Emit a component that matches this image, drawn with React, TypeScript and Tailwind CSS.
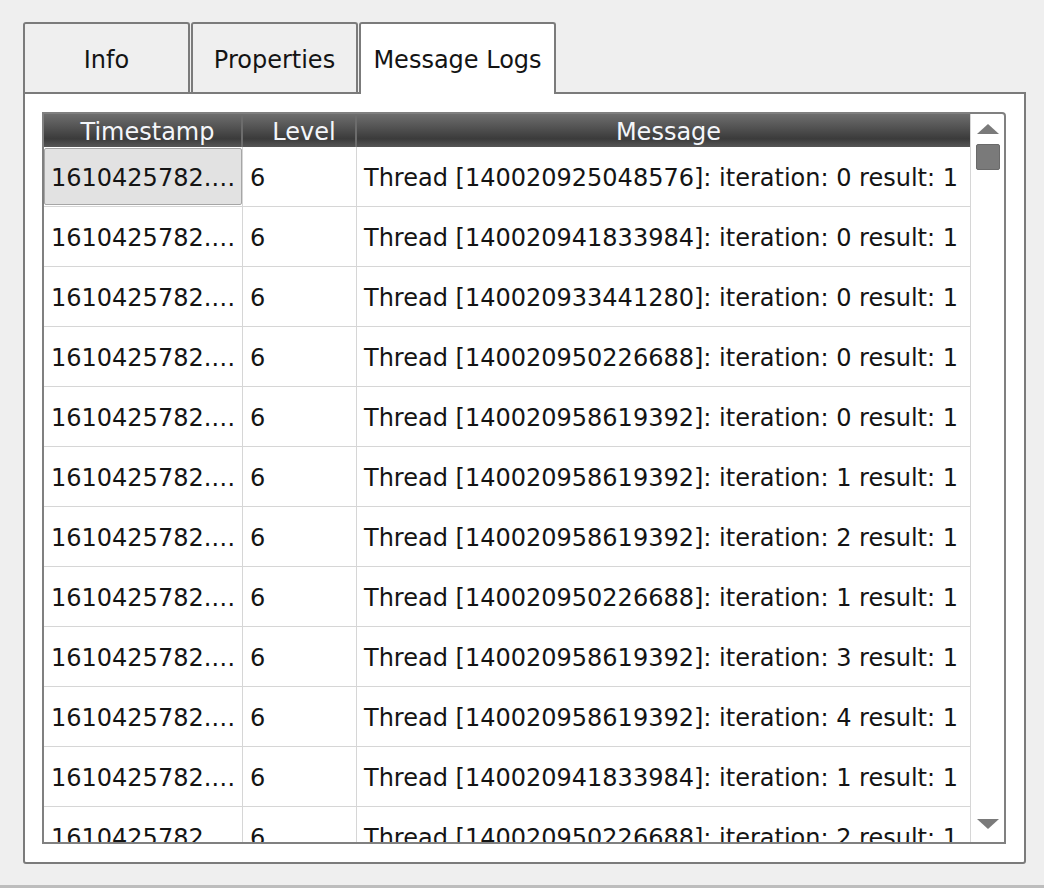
const rows: [string, number][] = [
  ["140020925048576", 0],
  ["140020941833984", 0],
  ["140020933441280", 0],
  ["140020950226688", 0],
  ["140020958619392", 0],
  ["140020958619392", 1],
  ["140020958619392", 2],
  ["140020950226688", 1],
  ["140020958619392", 3],
  ["140020958619392", 4],
  ["140020941833984", 1],
  ["140020950226688", 2],
];

const tabs = [
  { label: "Info", width: "w-[167px]", active: false },
  { label: "Properties", width: "w-[167px]", active: false },
  { label: "Message Logs", width: "w-[197px]", active: true },
];

export default function App() {
  return (
    <div className="w-[1044px] h-[888px] bg-[#efefef] flex flex-col font-['DejaVu_Sans',sans-serif] text-[24px] text-[#141414] overflow-hidden">
      <div className="pl-[23px] pt-[22px]">
        {/* Tab bar */}
        <div className="flex items-start gap-[1px] h-[70px]">
          {tabs.map((tab) => (
            <div
              key={tab.label}
              className={`${tab.width} border-2 border-b-0 border-[#7b7b7b] rounded-t-[3px] flex items-center justify-center ${
                tab.active ? "bg-white h-[72px] relative z-10 pt-[1px]" : "bg-[#efefef] h-[70px] pt-[3px]"
              }`}
            >
              {tab.label}
            </div>
          ))}
        </div>

        {/* Panel */}
        <div className="w-[1003px] h-[772px] border-2 border-[#7b7b7b] rounded-b-[3px] bg-white pl-[17px] pt-[18px]">
          <div className="w-[964px] h-[732px] border-2 border-[#808080] rounded-tr-[4px] flex overflow-hidden">
            <div className="w-[926px] flex flex-col overflow-hidden">
              {/* Header */}
              <div className="h-[33px] shrink-0 flex bg-[linear-gradient(to_bottom,#6e6e6e,#535353_40%,#3b3b3b_75%,#565656)] text-[#f4f6fa]">
                <div className="w-[199px] border-r-2 border-[#6c6c6c] flex items-center justify-center pl-[10px] pt-[2px]">Timestamp</div>
                <div className="w-[114px] border-r-2 border-[#6c6c6c] flex items-center justify-center pl-[10px] pt-[2px]">Level</div>
                <div className="flex-1 flex items-center justify-center pl-[10px] pt-[2px]">Message</div>
              </div>
              {/* Rows */}
              {rows.map(([thread, iter], i) => (
                <div key={i} className="h-[60px] shrink-0 flex border-b border-[#d6d6d6]">
                  <div className="w-[199px] border-r border-[#d6d6d6] flex items-stretch">
                    <div
                      className={`flex-1 flex items-center whitespace-nowrap ${
                        i === 0 ? "bg-[#e2e2e2] border border-[#a6a6a6] rounded-[2px] my-[1px] pl-[6px] pt-[2px]" : "pl-[7px] pt-[3px]"
                      }`}
                    >
                      1610425782.…
                    </div>
                  </div>
                  <div className="w-[114px] border-r border-[#d6d6d6] flex items-center pl-[7px] pt-[3px]">6</div>
                  <div className="flex-1 flex items-center pl-[7px] pt-[3px] whitespace-nowrap">
                    Thread [{thread}]: iteration: {iter} result: 1
                  </div>
                </div>
              ))}
            </div>

            {/* Scrollbar */}
            <div className="flex-1 border-l border-[#d6d6d6] flex flex-col items-center pt-[10px] pb-[13px]">
              <svg width="22" height="10" viewBox="0 0 22 10" className="shrink-0">
                <polygon points="11,0 22,10 0,10" fill="#7a7a7a" />
              </svg>
              <div className="w-[24px] h-[26px] mt-[10px] bg-[#7a7a7a] border border-[#6a6a6a] rounded-[2px]" />
              <div className="flex-1" />
              <svg width="22" height="10" viewBox="0 0 22 10" className="shrink-0">
                <polygon points="0,0 22,0 11,10" fill="#7a7a7a" />
              </svg>
            </div>
          </div>
        </div>
      </div>
      <div className="flex-1" />
      <div className="h-[3px] bg-[#bdbdbd]" />
    </div>
  );
}
